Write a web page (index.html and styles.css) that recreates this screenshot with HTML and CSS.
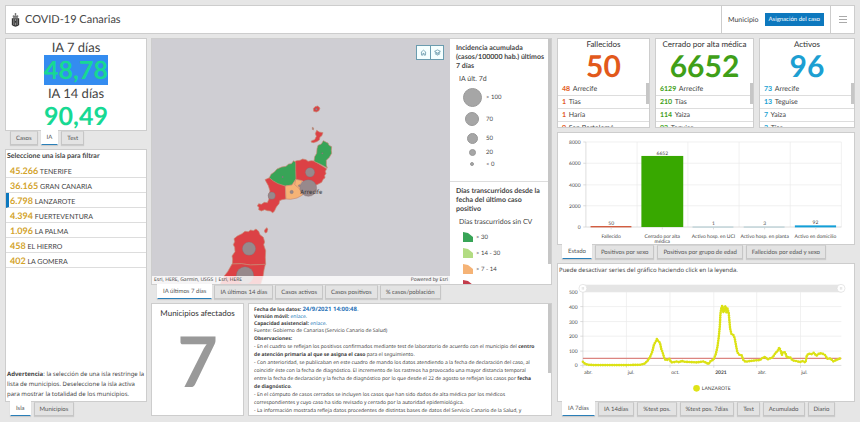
FILE: index.html
```
<!DOCTYPE html>
<html lang="es">
<head>
<meta charset="utf-8">
<title>COVID-19 Canarias</title>
<link rel="stylesheet" href="styles.css">
</head>
<body>
<div class="dashboard">
  <header class="header panel">
    <svg class="crest" viewBox="0 0 24 42" aria-hidden="true">
      <path d="M3 9l3-3 3 2 3-4 3 4 3-2 3 3-2 5H5z" fill="#888"/>
      <path d="M12 0V6M9 3h6M5 12h14" stroke="#555" stroke-width="2"/>
      <path d="M1 16H23V36Q20 40 12 41Q4 40 1 36Z" fill="#333"/>
      <path d="M7 18V36M12 18V24M12 29V37M17 18V36" stroke="#bbb" stroke-width="2"/>
    </svg>
    <h1>COVID-19 Canarias</h1>
    <div class="selector"><span>Municipio</span><button class="primary">Asignación del caso</button></div>
    <button class="menu" aria-label="Menú"><i></i><i></i><i></i></button>
  </header>

  <main class="columns">
    <div class="column">
      <section class="panel rates">
        <h2>IA 7 días</h2>
        <strong><mark>48,78</mark></strong>
        <h2>IA 14 días</h2>
        <strong>90,49</strong>
      </section>
      <nav class="tabs gap-after"><button>Casos</button><button class="active">IA</button><button>Test</button></nav>
      <section class="panel islands">
        <h3>Seleccione una isla para filtrar</h3>
        <ul>
          <li><button><b>45.266</b> TENERIFE</button></li>
          <li><button><b>36.165</b> GRAN CANARIA</button></li>
          <li><button class="selected"><b>6.798</b> LANZAROTE</button></li>
          <li><button><b>4.394</b> FUERTEVENTURA</button></li>
          <li><button><b>1.096</b> LA PALMA</button></li>
          <li><button><b>458</b> EL HIERRO</button></li>
          <li><button><b>402</b> LA GOMERA</button></li>
        </ul>
        <p><b>Advertencia</b>: la selección de una isla restringe la lista de municipios. Deseleccione la isla activa para mostrar la totalidad de los municipios.</p>
      </section>
      <nav class="tabs"><button class="active">Isla</button><button>Municipios</button></nav>
    </div>

    <div class="column">
      <section class="panel map-panel">
        <div class="map">
          <svg viewBox="6 9 894 741" preserveAspectRatio="xMinYMax slice" role="img" aria-label="Mapa de Lanzarote y Fuerteventura">
            <g stroke="#c98a72" stroke-width="2" stroke-linejoin="round">
              <g fill="#dc4145">
                <path d="M490 224l5-6 8-2 7 6-3 8-8 4-8-2z"/>
                <path d="M487 280l4 2-1 6-3-2z" fill="#777"/>
                <path d="M500 289l8 5 11 2-4 10-5 3-2 9-8 5-10 3-7-2 2-4 9-3 5-10-3-8z"/>
                <path d="M432 384l8-4 10-1 8-4 10 2 6 5 10-2 8 1 20 12 18 11-4 8 2 7-4 5 1 8-5 3-5 10-14 7-18 4-14-10-14-6-19-3-1-30z"/>
                <path d="M345 437l13-6 14 9 16 8 18 8 2 39-12 2-7 3-2 9-8 10-6 13-5 4-7-5-9-1-8-3-10 4-8-4 1-7-5-4 4-7 8 2 9-6 9 1 5-11-1-12 4-12-5-16z"/>
                <path d="M346 585l5-4 2 5-2 9-5 2-3-6z"/>
                <path d="M252 614l10-8 14-7 9-7 10 1 7-5 8 2 8-5 8 7 4 10 10 8 4 14-3 8 6 18-1 20 1 21-46 2-28-4-26 1 1-15-2-9 9-13-1-13-4-8 4-9z"/>
                <path d="M246 690l28-1 28 4 44-2-4 17-3 20-7 23H210l12-24 11-14z"/>
              </g>
              <g fill="#38a457">
                <path d="M520 320l9 5 5 2 3 7 8 4-1 11 1 9-7 12-9 9 0 14 3 9-18-10-22-10 2-14 6-10 1-14 3-10 10-4z"/>
                <path d="M358 431l5-10 10-7 8-9 14-6 13-2 8-7 8-1 7-9 6 6v24l1 26-11 17-21 3-22-7-14-8z"/>
              </g>
              <path d="M406 456l20-3 11-17 20 4-8 15 2 14 7 14-17 9-19 4-14-1z" fill="#f5b376"/>
              <path d="M437 438l-3 14 14 12 10 18" fill="none"/>
            </g>
            <g fill="#97898c" stroke="#826b70" stroke-width="1">
              <circle cx="480" cy="415" r="14"/><circle cx="365" cy="485" r="11"/>
              <circle cx="297" cy="644" r="20"/><circle cx="285" cy="724" r="26"/>
              <circle cx="475" cy="462" r="25"/><circle cx="425" cy="474" r="5"/>
              <circle cx="448" cy="455" r="3"/><circle cx="398" cy="429" r="2"/><circle cx="517" cy="358" r="2"/><circle cx="499" cy="226" r="3"/>
            </g>
            <text class="place" x="451" y="479">Arrecife</text>
          </svg>
          <div class="map-tools">
            <button aria-label="Inicio"><svg viewBox="0 0 24 24"><path d="M3 12 12 4l9 8M5 11v10h5v-6h4v6h5V11"/></svg></button>
            <button aria-label="Capas"><svg viewBox="0 0 24 24"><path d="M2 8 12 3l10 5-10 6zM3 12l9 5 9-5M3 16l9 5 9-5"/></svg></button>
          </div>
          <div class="attribution"><span>Esri, HERE, Garmin, USGS | Esri, HERE</span><span>Powered by Esri</span></div>
        </div>
        <aside class="legend">
          <div class="legend-group">
            <h3>Incidencia acumulada (casos/100000 hab.) últimos 7 días</h3>
            <h4>IA últ. 7d</h4>
            <ul class="sizes">
              <li class="size-5"><i></i>&gt; 100</li><li class="size-4"><i></i>70</li><li class="size-3"><i></i>50</li><li class="size-2"><i></i>20</li><li class="size-1"><i></i>&lt; 0</li>
            </ul>
          </div>
          <div class="legend-group">
            <h3>Días transcurridos desde la fecha del último caso positivo</h3>
            <h4>Días trascurridos sin CV</h4>
            <ul class="swatches">
              <li class="green"><i></i>&gt; 30</li><li class="lime"><i></i>&gt; 14 - 30</li><li class="orange"><i></i>&gt; 7 - 14</li><li class="red"><i></i></li>
            </ul>
          </div>
          <span class="thumb thumb-legend"></span>
        </aside>
      </section>
      <nav class="tabs tabs-map gap-after"><button class="active">IA últimos 7 días</button><button>IA últimos 14 días</button><button>Casos activos</button><button>Casos positivos</button><button>% casos/población</button></nav>
      <div class="lower">
        <section class="panel affected"><h2>Municipios afectados</h2><strong>7</strong></section>
        <section class="panel notes">
          <div class="source">
            <p><b>Fecha de los datos: <span class="date">24/9/2021 14:00:48</span></b><span class="date">.</span></p>
            <p><b>Versión móvil:</b> <a href="#movil">enlace</a>.</p>
            <p><b>Capacidad asistencial:</b> <a href="#capacidad">enlace</a>.</p>
            <p>Fuente: Gobierno de Canarias (Servicio Canario de Salud)</p>
          </div>
          <p><b>Observaciones:</b></p>
          <p>- En el cuadro se reflejan los positivos confirmados mediante test de laboratorio de acuerdo con el municipio del <b>centro<br>de atención primaria al que se asigna el caso</b> para el seguimiento.</p>
          <p>- Con anterioridad, se publicaban en este cuadro de mando los datos atendiendo a la fecha de declaración del caso, al<br>coincidir éste con la fecha de diagnóstico. El incremento de los rastreos ha provocado una mayor distancia temporal<br>entre la fecha de declaración y la fecha de diagnóstico por lo que desde el 22 de agosto se reflejan los casos por <b>fecha<br>de diagnóstico</b>.</p>
          <p>- En el cómputo de casos cerrados se incluyen los casos que han sido dados de alta médica por los médicos<br>correspondientes y cuyo caso ha sido revisado y cerrado por la autoridad epidemiológica.</p>
          <p>- La información mostrada refleja datos procedentes de distintas bases de datos del Servicio Canario de la Salud, y</p>
          <span class="thumb thumb-notes"></span>
        </section>
      </div>
    </div>

    <div class="column charts">
      <div class="cards">
        <section class="panel card deaths">
          <h2>Fallecidos</h2><strong>50</strong>
          <ul><li><b>48</b> Arrecife</li><li><b>1</b> Tías</li><li><b>1</b> Haría</li><li><b>0</b> San Bartolomé</li></ul>
          <span class="thumb thumb-card"></span>
        </section>
        <section class="panel card closed">
          <h2>Cerrado por alta médica</h2><strong>6652</strong>
          <ul><li><b>6129</b> Arrecife</li><li><b>210</b> Tías</li><li><b>114</b> Yaiza</li><li><b>93</b> Teguise</li></ul>
          <span class="thumb thumb-card"></span>
        </section>
        <section class="panel card current">
          <h2>Activos</h2><strong>96</strong>
          <ul><li><b>73</b> Arrecife</li><li><b>13</b> Teguise</li><li><b>7</b> Yaiza</li><li><b>2</b> Tías</li></ul>
          <span class="thumb thumb-card"></span>
        </section>
      </div>
      <section class="panel chart chart-bars">
        <svg viewBox="22 10 891 334" role="img" aria-label="Casos por estado">
          <path class="grid" d="M106 37H875M106 101H875M106 166H875M106 229H875M260 37V293M413 37V293M567 37V293M721 37V293M875 37V293"/>
          <path class="axis" d="M106 37V293H875M98 37h8M98 101h8M98 166h8M98 229h8M98 293h8"/>
          <rect x="273" y="79" width="126" height="214" fill="#38a800"/>
          <rect x="120" y="290" width="123" height="4" fill="#d2583a"/>
          <path d="M427 293h123M581 293h123" stroke="#8fb9c4" stroke-width="2"/>
          <rect x="735" y="288" width="124" height="6" fill="#129fd8"/>
          <path class="axis" d="M182 294v6M336 294v6M490 294v6M644 294v6M798 294v6"/>
          <g class="ticks end"><text x="90" y="43">8000</text><text x="90" y="107">6000</text><text x="90" y="172">4000</text><text x="90" y="235">2000</text><text x="90" y="299">0</text></g>
          <g class="ticks middle"><text x="182" y="286">50</text><text x="336" y="75">6652</text><text x="490" y="286">1</text><text x="644" y="286">3</text><text x="797" y="285">92</text></g>
          <g class="names middle"><text x="182" y="325">Fallecido</text><text x="336" y="325">Cerrado por alta</text><text x="336" y="341">médica</text><text x="490" y="325">Activo hosp. en UCI</text><text x="644" y="325">Activo hosp. en planta</text><text x="797" y="325">Activo en domicilio</text></g>
        </svg>
      </section>
      <nav class="tabs gap-after"><button class="active">Estado</button><button>Positivos por sexo</button><button>Positivos por grupo de edad</button><button>Fallecidos por edad y sexo</button></nav>
      <section class="panel chart chart-line">
        <p>Puede desactivar series del gráfico haciendo click en la leyenda.</p>
        <svg viewBox="22 64 891 376" role="img" aria-label="Incidencia acumulada de Lanzarote">
          <rect x="97" y="90" width="777" height="22" fill="#e5e5e5"/>
          <path class="grid" d="M97 112H875M97 156H875M97 201H875M97 245H875M97 290H875M228 112V333M359 112V333M491 112V333M620 112V333M752 112V333"/>
          <path class="axis" d="M97 112V333H875M89 156h8M89 201h8M89 245h8M89 290h8M89 333h8M97 333v7M228 333v7M359 333v7M491 333v7M620 333v7M752 333v7"/>
          <g fill="#fff" stroke="#ddd" stroke-width="2"><circle cx="97" cy="101" r="12"/><circle cx="874" cy="101" r="12"/></g>
          <path d="M95 97v8M99 97v8M872 97v8M876 97v8" stroke="#aaa" stroke-width="1"/>
          <path d="M97 312H875" stroke="#dc8580" stroke-width="4"/>
          <path class="series" d="M97 322L103 328 112 331 130 332 230 332 270 331 282 328 291 320 299 308 306 291 311 270 316 262 320 253 324 260 329 265 333 284 338 297 343 315 350 317 357 313 363 324 372 323 380 321 388 324 393 319 402 322 440 324 460 321 470 326 475 329 482 319 490 316 497 299 502 277 506 247 509 216 511 178 514 158 517 153 520 174 523 164 526 154 529 174 532 162 536 176 540 222 544 238 550 242 554 251 558 274 562 294 568 301 575 303 580 317 586 322 600 320 615 318 630 317 638 310 645 307 653 315 660 312 668 309 677 295 683 290 688 279 692 288 696 302 699 293 706 294 711 309 721 309 728 318 740 320 750 323 758 320 767 324 771 303 777 297 784 300 792 295 800 304 808 297 817 297 825 301 833 313 842 312 851 321 861 316 874 311"/>
          <path class="points" d="M97 322L103 328 112 331 130 332 230 332 270 331 282 328 291 320 299 308 306 291 311 270 316 262 320 253 324 260 329 265 333 284 338 297 343 315 350 317 357 313 363 324 372 323 380 321 388 324 393 319 402 322 440 324 460 321 470 326 475 329 482 319 490 316 497 299 502 277 506 247 509 216 511 178 514 158 517 153 520 174 523 164 526 154 529 174 532 162 536 176 540 222 544 238 550 242 554 251 558 274 562 294 568 301 575 303 580 317 586 322 600 320 615 318 630 317 638 310 645 307 653 315 660 312 668 309 677 295 683 290 688 279 692 288 696 302 699 293 706 294 711 309 721 309 728 318 740 320 750 323 758 320 767 324 771 303 777 297 784 300 792 295 800 304 808 297 817 297 825 301 833 313 842 312 851 321 861 316 874 311"/>
          <g class="ticks end"><text x="81" y="118">500</text><text x="81" y="162">400</text><text x="81" y="207">300</text><text x="81" y="251">200</text><text x="81" y="296">100</text><text x="81" y="339">0</text></g>
          <g class="ticks"><text x="101" y="359">abr.</text><text x="232" y="359">jul.</text><text x="363" y="359">oct.</text><text class="year" x="495" y="359">2021</text><text x="624" y="359">abr.</text><text x="754" y="359">jul.</text></g>
          <circle cx="439" cy="402" r="10" fill="#dfe317"/>
          <text class="series-name" x="455" y="408">LANZAROTE</text>
        </svg>
      </section>
      <nav class="tabs"><button class="active">IA 7días</button><button>IA 14días</button><button>%test pos.</button><button>%test pos. 7días</button><button>Test</button><button>Acumulado</button><button>Diario</button></nav>
    </div>
  </main>
</div>
</body>
</html>
```
FILE: styles.css
```
* { box-sizing: border-box; margin: 0; padding: 0; }
body { background: #e6e6e6; color: #444; font-family: Lato, "Liberation Sans", sans-serif; font-size: 7px; text-rendering: geometricPrecision; }
button { background: none; border: 0; color: inherit; font: inherit; text-rendering: inherit; }
ul { list-style: none; }
a { color: #1a79b8; text-decoration: none; }
.dashboard { display: flex; flex-direction: column; gap: 4px; height: 100vh; padding: 5px 5px 6px; overflow: hidden; }
.panel { background: #fff; border: 1px solid #cdcdcd; position: relative; overflow: hidden; }

.header { display: flex; align-items: center; height: 29px; flex: none; padding-left: 5px; }
.crest { width: 9px; height: 14px; margin-right: 5px; }
.header h1 { flex: 1; font-size: 11px; font-weight: 400; }
.selector { display: flex; align-items: center; align-self: stretch; gap: 6px; padding: 0 6px; border-left: 1px solid #ccc; font-size: 7px; }
.primary { background: #0d78be; color: #fff; font-size: 6px; height: 13px; padding: 0 4px; }
.menu { align-self: stretch; width: 24px; border-left: 1px solid #ccc; display: flex; flex-direction: column; justify-content: center; align-items: center; gap: 2px; }
.menu i { width: 8px; height: 1px; background: #aaa; }

.columns { display: grid; grid-template-columns: 142fr 401fr 299fr; gap: 4px; flex: 1; min-height: 0; }
.column { display: flex; flex-direction: column; min-width: 0; min-height: 0; }
.charts { padding-left: 1px; }

.tabs { display: flex; gap: 3px; height: 14px; flex: none; padding-left: 5px; }
.tabs-map { gap: 2px; padding-left: 6px; }
.tabs button { background: #e3e3e3; border: 1px solid #c6c6c6; border-top-color: #d4d4d4; color: #555; font-size: 6px; white-space: nowrap; padding: 0 5px; box-shadow: 0 1px 1px #ccc; }
.tabs .active { background: #fff; border-color: #fff; border-bottom: 1px solid #2a7fb8; margin-top: -1px; position: relative; }
.gap-after { margin-bottom: 4px; }

.rates { height: 93px; flex: none; text-align: center; }
.rates h2 { font-size: 13px; line-height: 16px; font-weight: 400; }
.rates strong { display: block; color: #17d993; font-size: 25px; line-height: 30px; font-weight: 700; }
.rates mark { display: inline-block; background: #348cf0; color: inherit; }

.islands { flex: 1; display: flex; flex-direction: column; }
.islands h3 { font-size: 7px; line-height: 13px; padding: 0 1px; }
.islands ul { flex: 1; }
.islands li button { display: block; width: 100%; height: 15px; padding-left: 4px; border-bottom: 1px solid #ddd; text-align: left; font-size: 7px; }
.islands li b { color: #d3a32b; font-size: 9px; }
.islands li .selected { border-left: 3px solid #0d78be; padding-left: 1px; }
.islands p { font-family: "Noto Sans", sans-serif; font-size: 6px; line-height: 10px; padding: 0 1px 2px; }

.map-panel { flex: 1; display: flex; }
.map { flex: 1; position: relative; background: #cfced3; min-width: 0; }
.map > svg { display: block; width: 100%; height: 100%; }
.place { font-family: "Noto Sans", sans-serif; font-size: 18px; fill: #333; }
.map-tools { position: absolute; right: 6px; top: 6px; display: flex; border: 1px solid #6a9caf; background: #f5ffff; }
.map-tools button { width: 13px; height: 13px; display: grid; place-items: center; }
.map-tools button + button { border-left: 1px solid #6a9caf; }
.map-tools svg { width: 7px; height: 7px; fill: none; stroke: #3d7990; stroke-width: 2; }
.attribution { position: absolute; left: 0; right: 0; bottom: 0; display: flex; justify-content: space-between; height: 8px; padding: 0 2px; background: rgba(255, 255, 255, .8); font: 5px/8px "Noto Sans", sans-serif; }
.legend { width: 101px; position: relative; overflow: hidden; background: #fff; }
.legend-group { padding: 5px 4px 0 6px; }
.legend-group + .legend-group { border-top: 1px solid #ddd; margin-top: 11px; }
.legend h3 { font-size: 7px; line-height: 9px; }
.legend h4 { font-size: 7px; line-height: 9px; font-weight: 400; margin: 4px 3px 2px; }
.legend li { display: flex; align-items: center; font-size: 6px; }
.sizes li { display: grid; grid-template-columns: 28px 1fr; padding-left: 2px; }
.sizes .size-5, .sizes .size-4, .sizes .size-3, .sizes .size-2, .sizes .size-1 { display: grid; }
.sizes i { justify-self: center; border-radius: 50%; background: #a6a6a6; border: 1px solid #999; }
.size-5 { height: 22px; } .size-5 i { width: 19px; height: 19px; }
.size-4 { height: 22px; } .size-4 i { width: 14px; height: 14px; }
.size-3 { height: 16px; } .size-3 i { width: 11px; height: 11px; }
.size-2 { height: 12px; } .size-2 i { width: 7px; height: 7px; }
.size-1 { height: 12px; } .size-1 i { width: 4px; height: 4px; }
.swatches li { height: 16px; padding-left: 7px; gap: 3px; }
.swatches i { width: 10px; height: 10px; background: currentColor; clip-path: polygon(0 0, 50% 10%, 100% 50%, 100% 100%, 0 100%); }
.green i { color: #38a457; } .lime i { color: #b2dc82; } .orange i { color: #f5b376; } .red i { color: #c33c4b; }

.lower { display: grid; grid-template-columns: 93fr 304fr; gap: 4px; height: 113px; flex: none; }
.affected { text-align: center; }
.affected h2 { font-size: 8px; line-height: 10px; margin-top: 4px; font-weight: 400; color: #333; }
.affected strong { display: block; color: #999; font-size: 70px; line-height: 84px; font-weight: 700; }
.notes { padding: 2px 5px; font-family: "Noto Sans", sans-serif; font-size: 5px; line-height: 8px; white-space: nowrap; }
.source { line-height: 7px; }
.date { color: #2a73b8; font-size: 6px; }

.thumb { position: absolute; right: 0; background: #c6c6c6; }
.thumb-legend { top: 0; width: 3px; height: 92%; }
.thumb-notes { top: 0; width: 3px; height: 62%; }
.thumb-card { top: 44px; width: 3px; height: 21px; }

.cards { display: grid; grid-template-columns: 93fr 99fr 96fr; gap: 5px; height: 90px; flex: none; margin-bottom: 4px; }
.card { text-align: center; }
.card h2 { font-size: 8px; line-height: 10px; white-space: nowrap; font-weight: 400; color: #333; }
.card strong { display: block; font-size: 30px; line-height: 34px; font-weight: 700; }
.card ul { text-align: left; }
.card li { height: 13px; line-height: 13px; padding-left: 4px; border-bottom: 1px solid #ddd; font-size: 7px; white-space: nowrap; }
.card li b { margin-right: 1px; }
.deaths strong, .deaths b { color: #e2591b; }
.closed strong, .closed b { color: #3f9f18; }
.current strong, .current b { color: #1c9fd2; }

.chart svg { display: block; width: 100%; flex: 1; min-height: 0; }
.chart-bars { height: 113px; flex: none; display: flex; flex-direction: column; }
.chart-line { flex: 1; display: flex; flex-direction: column; min-height: 0; }
.chart-line p { font-family: "Noto Sans", sans-serif; font-size: 6px; line-height: 12px; padding-left: 1px; flex: none; }
.grid { fill: none; stroke: #eaeaea; stroke-width: 2; }
.axis { fill: none; stroke: #ccc; stroke-width: 2; }
.ticks { font-size: 15px; fill: #444; }
.names { font-size: 15px; fill: #444; }
.end { text-anchor: end; }
.middle { text-anchor: middle; }
.year { font-weight: 700; }
.series { fill: none; stroke: #e3e644; stroke-width: 4; stroke-linejoin: round; }
.points { fill: none; stroke: #dbe113; stroke-width: 8; stroke-linecap: round; stroke-dasharray: 0 7; }
.series-name { font-size: 15px; fill: #444; }
```
